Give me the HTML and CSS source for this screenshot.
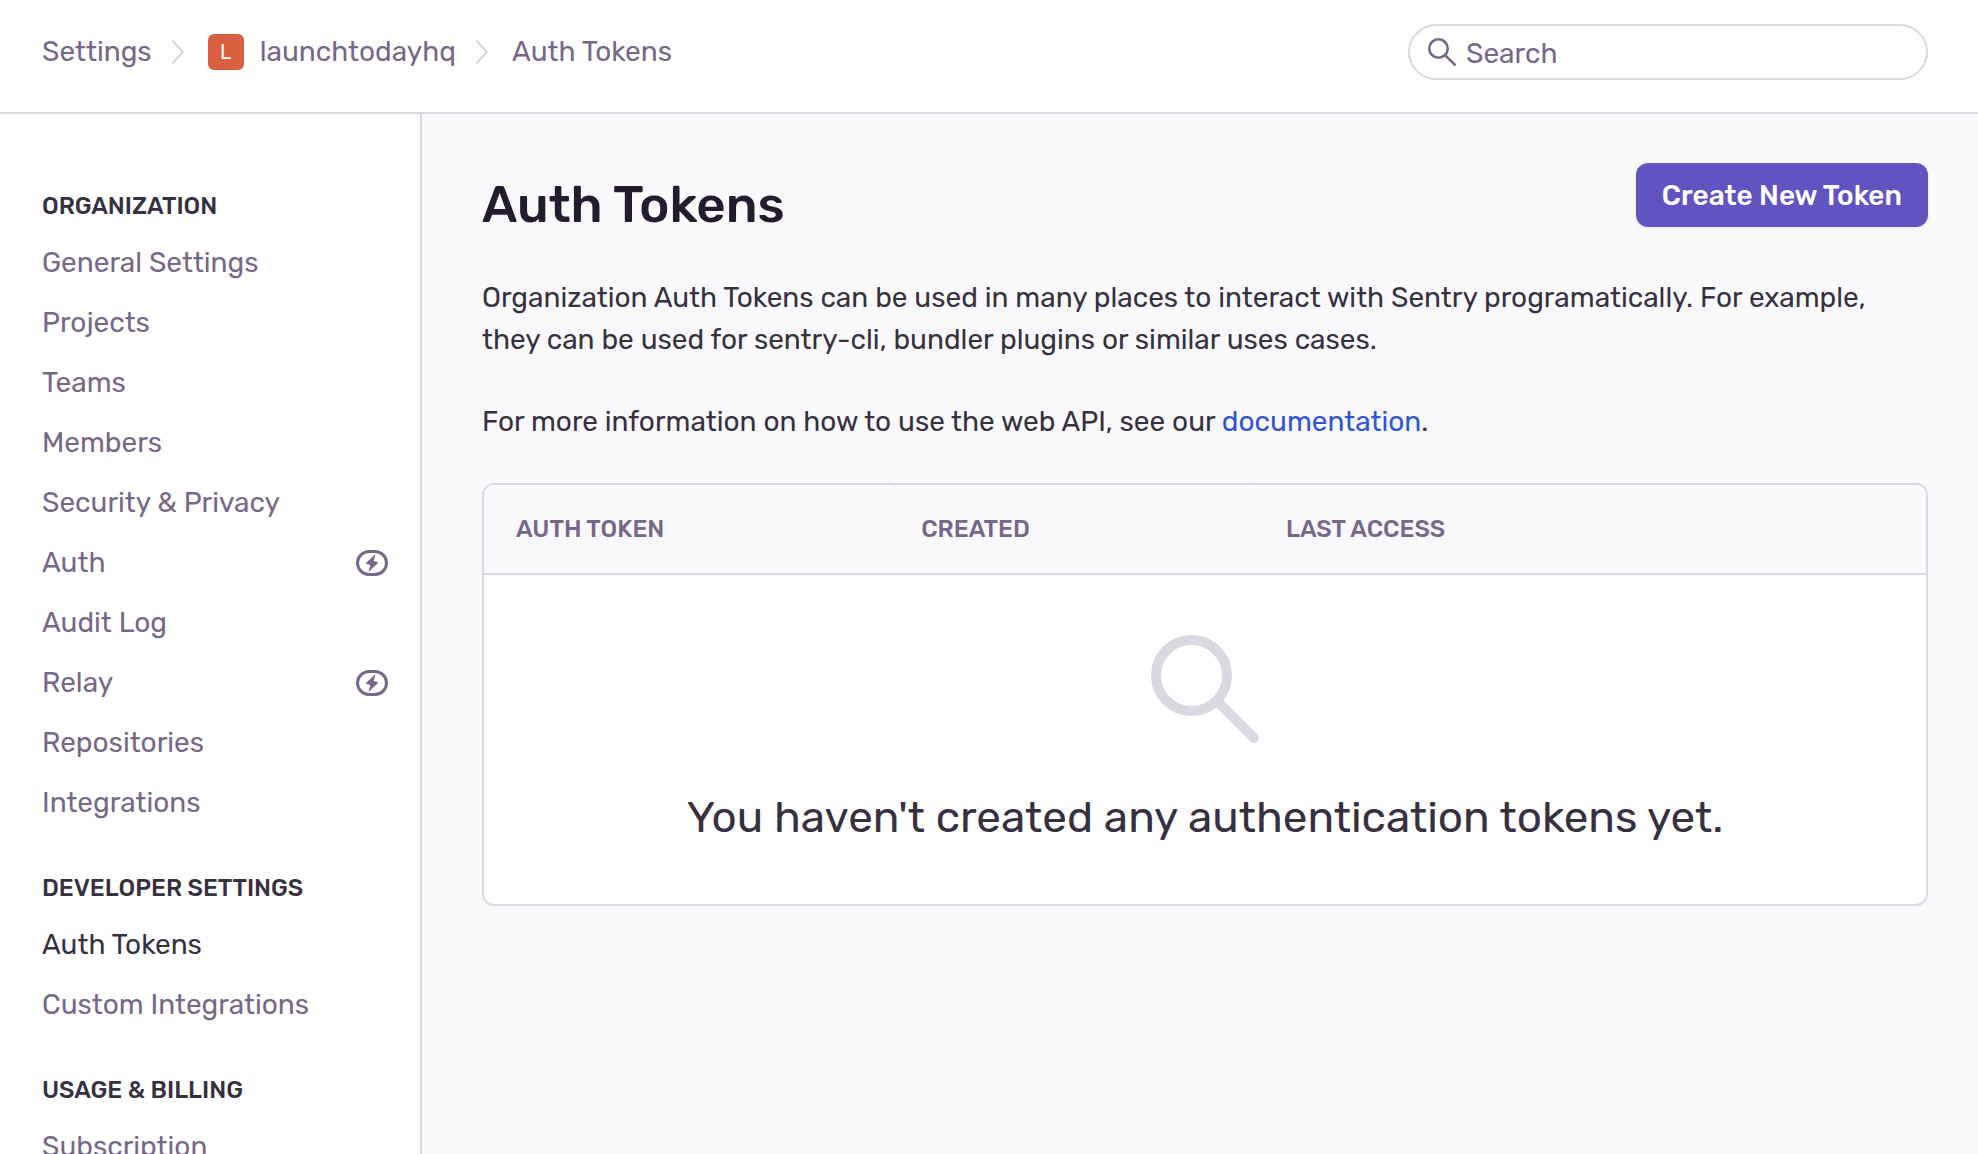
FILE: index.html
```html
<!DOCTYPE html>
<html lang="en">
<head>
<meta charset="utf-8">
<meta name="viewport" content="width=device-width, initial-scale=1">
<title>Auth Tokens</title>
<link rel="stylesheet" href="styles.css">
</head>
<body>
<svg class="sprite" aria-hidden="true">
  <symbol id="icon-bolt" viewBox="0 0 32 26">
    <rect x="1.500" y="1.500" width="29" height="23" rx="11.500" fill="none" stroke="currentColor" stroke-width="3"/>
    <path d="M19.500 4 10.200 12.800q-.6 1 .5 1.300l3.600 1L12.500 22l9.300-8.800q.6-1-.5-1.300l-3.600-1z" fill="currentColor"/>
  </symbol>
  <symbol id="icon-search" viewBox="0 0 108 108">
    <circle cx="40.500" cy="40.500" r="35.500" fill="none" stroke="currentColor" stroke-width="10"/>
    <path d="M68 68l35 35" stroke="currentColor" stroke-width="10" stroke-linecap="round"/>
  </symbol>
  <symbol id="icon-chevron" viewBox="0 0 14 24">
    <path d="M2 1.500 12 12 2 22.500" fill="none" stroke="currentColor" stroke-width="2.500" stroke-linecap="round" stroke-linejoin="round"/>
  </symbol>
</svg>

<header class="topbar">
  <nav class="breadcrumbs" aria-label="Breadcrumb">
    <a href="#settings">Settings</a>
    <svg class="chevron" aria-hidden="true"><use href="#icon-chevron"/></svg>
    <a class="org" href="#org"><span class="avatar" aria-hidden="true">L</span>launchtodayhq</a>
    <svg class="chevron" aria-hidden="true"><use href="#icon-chevron"/></svg>
    <a href="#auth-tokens">Auth Tokens</a>
  </nav>
  <label class="search">
    <svg class="search-icon" aria-hidden="true"><use href="#icon-search"/></svg>
    <input type="text" placeholder="Search" aria-label="Search">
  </label>
</header>

<div class="layout">
  <nav class="sidebar" aria-label="Settings">
    <section>
      <h2>Organization</h2>
      <ul>
        <li><a href="#general">General Settings</a></li>
        <li><a href="#projects">Projects</a></li>
        <li><a href="#teams">Teams</a></li>
        <li><a href="#members">Members</a></li>
        <li><a href="#security">Security &amp; Privacy</a></li>
        <li><a href="#auth">Auth <svg class="bolt" aria-hidden="true"><use href="#icon-bolt"/></svg></a></li>
        <li><a href="#audit">Audit Log</a></li>
        <li><a href="#relay">Relay <svg class="bolt" aria-hidden="true"><use href="#icon-bolt"/></svg></a></li>
        <li><a href="#repositories">Repositories</a></li>
        <li><a href="#integrations">Integrations</a></li>
      </ul>
    </section>
    <section>
      <h2>Developer Settings</h2>
      <ul>
        <li><a class="active" href="#auth-tokens" aria-current="page">Auth Tokens</a></li>
        <li><a href="#custom">Custom Integrations</a></li>
      </ul>
    </section>
    <section>
      <h2>Usage &amp; Billing</h2>
      <ul>
        <li><a href="#subscription">Subscription</a></li>
      </ul>
    </section>
  </nav>

  <main class="content">
    <div class="page-head">
      <h1>Auth Tokens</h1>
      <button class="primary" type="button">Create New Token</button>
    </div>
    <p>Organization Auth Tokens can be used in many places to interact with Sentry programatically. For example, they can be used for sentry-cli, bundler plugins or similar uses cases.</p>
    <p>For more information on how to use the web API, see our <a href="#docs">documentation</a>.</p>
    <table class="tokens">
      <colgroup><col class="c-token"><col class="c-created"><col class="c-access"><col></colgroup>
      <thead>
        <tr><th scope="col">Auth Token</th><th scope="col">Created</th><th scope="col">Last Access</th><td></td></tr>
      </thead>
      <tbody>
        <tr>
          <td class="empty" colspan="4">
            <svg class="empty-icon" aria-hidden="true"><use href="#icon-search"/></svg>
            <div>You haven't created any authentication tokens yet.</div>
          </td>
        </tr>
      </tbody>
    </table>
  </main>
</div>
</body>
</html>
```

FILE: styles.css
```css
* {
  box-sizing: border-box;
}

:root {
  --text: #36303f;
  --heading: #241c2e;
  --muted: #766788;
  --border: #dad8e1;
  --surface: #f9f9fb;
}

html,
body {
  height: 100%;
}

body {
  margin: 0;
  display: flex;
  flex-direction: column;
  overflow: hidden;
  background: var(--surface);
  color: var(--text);
  font: 400 28px/42px Rubik, Inter, sans-serif;
}

a {
  color: inherit;
  text-decoration: none;
}

.sprite {
  position: absolute;
  width: 0;
  height: 0;
}

/* Top bar */
.topbar {
  flex: none;
  display: flex;
  justify-content: space-between;
  align-items: flex-start;
  padding: 24px 50px 32px 42px;
  background: #fff;
  border-bottom: 2px solid var(--border);
  color: var(--muted);
}

.breadcrumbs {
  display: flex;
  align-items: center;
  height: 56px;
}

.org {
  display: flex;
  align-items: center;
  gap: 16px;
}

.avatar {
  width: 36px;
  height: 36px;
  border-radius: 6px;
  background: #d95f41;
  color: #fff;
  font-size: 20px;
  line-height: 36px;
  text-align: center;
}

.chevron {
  width: 14px;
  height: 24px;
  margin: 0 23px 0 19px;
  color: var(--border);
}

.search {
  display: flex;
  align-items: center;
  gap: 10px;
  width: 520px;
  height: 56px;
  padding: 0 18px;
  border: 2px solid var(--border);
  border-radius: 28px;
  box-shadow: inset 0 2px 4px rgba(43, 34, 51, 0.04);
}

.search-icon {
  flex: none;
  width: 28px;
  height: 28px;
}

.search input {
  flex: 1;
  min-width: 0;
  padding: 4px 0 0;
  border: 0;
  outline: 0;
  background: none;
  color: inherit;
  font: inherit;
}

.search input::placeholder {
  color: inherit;
  opacity: 1;
}

/* Columns */
.layout {
  flex: 1;
  min-height: 0;
  display: flex;
}

.sidebar {
  flex: none;
  width: 422px;
  padding: 77px 32px 0 42px;
  overflow: hidden;
  background: #fff;
  border-right: 2px solid var(--border);
  color: var(--muted);
}

.sidebar section {
  margin-bottom: 40px;
}

.sidebar h2 {
  margin: 0 0 12px;
  color: var(--text);
  font-size: 24px;
  font-weight: 500;
  line-height: 30px;
  text-transform: uppercase;
}

.sidebar ul {
  margin: 0;
  padding: 0;
  list-style: none;
}

.sidebar a {
  display: flex;
  align-items: center;
  justify-content: space-between;
  height: 60px;
}

.sidebar .active {
  color: var(--text);
}

.bolt {
  width: 32px;
  height: 26px;
}

/* Main content */
.content {
  flex: 1;
  min-width: 0;
  padding: 49px 50px 0 60px;
}

.page-head {
  display: flex;
  align-items: flex-start;
  justify-content: space-between;
  margin-bottom: 40px;
}

h1 {
  margin: 0;
  padding-top: 10px;
  color: var(--heading);
  font-size: 51px;
  font-weight: 500;
  line-height: 64px;
}

.primary {
  height: 64px;
  padding: 2px 26px 0;
  border: 0;
  border-radius: 12px;
  background: #6254c0;
  box-shadow: 0 2px 4px rgba(43, 34, 51, 0.06);
  color: #fff;
  font: 500 28px/32px Rubik, Inter, sans-serif;
}

.content p {
  margin: 0 0 40px;
}

.content p a {
  color: #2f54d6;
}

.tokens {
  width: 100%;
  table-layout: fixed;
  border: 2px solid var(--border);
  border-radius: 12px;
  border-spacing: 0;
  background: #fff;
  overflow: hidden;
}

.c-token {
  width: 28.1%;
}

.c-created {
  width: 25.3%;
}

.c-access {
  width: 28.8%;
}

.tokens thead th,
.tokens thead td {
  position: relative;
  height: 90px;
  padding: 0 32px;
  background: var(--surface);
  border-bottom: 2px solid var(--border);
  color: var(--muted);
  font-size: 24px;
  font-weight: 500;
  line-height: 30px;
  text-align: left;
  text-transform: uppercase;
}

/* Notch between neighbouring header cells */
.tokens thead th::after {
  content: "";
  position: absolute;
  z-index: 1;
  top: 0;
  right: -5px;
  border: 5px solid transparent;
  border-top-color: #fff;
  border-bottom: 0;
}

.tokens .empty {
  padding: 60px 32px 57px;
  font-size: 44px;
  line-height: 60px;
  text-align: center;
}

.empty-icon {
  display: block;
  width: 108px;
  height: 108px;
  margin: 0 auto 44px;
  color: var(--border);
}
```
